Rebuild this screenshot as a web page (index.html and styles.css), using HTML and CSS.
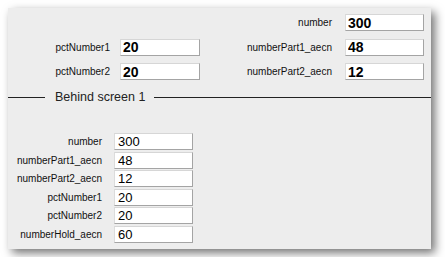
FILE: index.html
```html
<!DOCTYPE html>
<html>

<head>
	<meta charset="utf-8">
	<title>Behind screen</title>
	<link rel="stylesheet" href="styles.css">
</head>

<body>
	<div class="panel">
		<div class="top">
			<span></span><span></span>
			<label class="label right">number</label><input class="field big" type="text" value="300" readonly />
			<label class="label">pctNumber1</label><input class="field big" type="text" value="20" readonly />
			<label class="label right">numberPart1_aecn</label><input class="field big" type="text" value="48" readonly />
			<label class="label">pctNumber2</label><input class="field big" type="text" value="20" readonly />
			<label class="label right">numberPart2_aecn</label><input class="field big" type="text" value="12" readonly />
		</div>
		<div class="divider"><span>Behind screen 1</span></div>
		<div class="lower">
			<label class="label">number</label><input class="field" type="text" value="300" readonly />
			<label class="label">numberPart1_aecn</label><input class="field" type="text" value="48" readonly />
			<label class="label">numberPart2_aecn</label><input class="field" type="text" value="12" readonly />
			<label class="label">pctNumber1</label><input class="field" type="text" value="20" readonly />
			<label class="label">pctNumber2</label><input class="field" type="text" value="20" readonly />
			<label class="label">numberHold_aecn</label><input class="field" type="text" value="60" readonly />
		</div>
	</div>
</body>

</html>
```

FILE: styles.css
```css
* {
	margin: 0;
	padding: 0;
	box-sizing: border-box;
}
body {
	background-color: #ffffff;
	font-family: "Liberation Sans", Arial, sans-serif;
	color: #111111;
}
.panel {
	margin: 8px;
	width: 423px;
	height: 241px;
	background-color: #ededed;
	box-shadow: 4px 4px 9px rgba(0, 0, 0, 0.55);
	overflow: hidden;
}
.top {
	display: grid;
	grid-template-columns: 112px 80px 145px 79px;
	grid-auto-rows: 17px;
	row-gap: 7.5px;
	padding-top: 6px;
}
.label {
	font-size: 10px;
	text-align: right;
	padding-right: 10px;
	line-height: 17px;
	white-space: nowrap;
}
.top .label.right {
	padding-right: 13px;
}
.field {
	width: 100%;
	height: 17px;
	border: 1px solid;
	border-color: #d6d6d6 #a4a4a4 #a4a4a4 #dcdcdc;
	background-color: #ffffff;
	font-family: "Liberation Sans", Arial, sans-serif;
	font-size: 13px;
	color: #000000;
	padding: 0 3px;
	outline: none;
}
.field.big {
	font-size: 14px;
	font-weight: bold;
	padding-left: 2px;
}
.divider {
	display: flex;
	align-items: center;
	margin-top: 10px;
	height: 14px;
}
.divider::before {
	content: "";
	width: 37px;
	border-top: 1px solid #222222;
}
.divider::after {
	content: "";
	flex: 1;
	border-top: 1px solid #222222;
}
.divider span {
	font-size: 12.5px;
	color: #222222;
	padding: 0 9px 0 10px;
}
.lower {
	display: grid;
	grid-template-columns: 106px 79px;
	grid-auto-rows: 17px;
	row-gap: 1.6px;
	margin-top: 29px;
}
.lower .label {
	padding-right: 12px;
}
```
